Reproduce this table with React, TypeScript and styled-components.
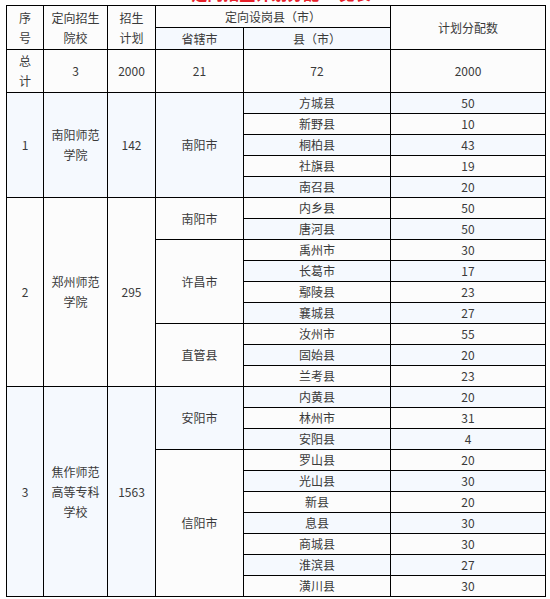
import React from "react";
import styled, { createGlobalStyle } from "styled-components";

const GlobalStyle = createGlobalStyle`
  html, body {
    margin: 0;
    padding: 0;
    background: #ffffff;
  }
  body {
    font-family: "Noto Sans CJK SC", "Noto Sans", sans-serif;
  }
`;

type County = { name: string; count: number };
type City = { name: string; counties: County[] };
type School = { no: string; name: string; plan: number; cities: City[] };

const schools: School[] = [
  {
    no: "1",
    name: "南阳师范学院",
    plan: 142,
    cities: [
      {
        name: "南阳市",
        counties: [
          { name: "方城县", count: 50 },
          { name: "新野县", count: 10 },
          { name: "桐柏县", count: 43 },
          { name: "社旗县", count: 19 },
          { name: "南召县", count: 20 },
        ],
      },
    ],
  },
  {
    no: "2",
    name: "郑州师范学院",
    plan: 295,
    cities: [
      {
        name: "南阳市",
        counties: [
          { name: "内乡县", count: 50 },
          { name: "唐河县", count: 50 },
        ],
      },
      {
        name: "许昌市",
        counties: [
          { name: "禹州市", count: 30 },
          { name: "长葛市", count: 17 },
          { name: "鄢陵县", count: 23 },
          { name: "襄城县", count: 27 },
        ],
      },
      {
        name: "直管县",
        counties: [
          { name: "汝州市", count: 55 },
          { name: "固始县", count: 20 },
          { name: "兰考县", count: 23 },
        ],
      },
    ],
  },
  {
    no: "3",
    name: "焦作师范高等专科学校",
    plan: 1563,
    cities: [
      {
        name: "安阳市",
        counties: [
          { name: "内黄县", count: 20 },
          { name: "林州市", count: 31 },
          { name: "安阳县", count: 4 },
        ],
      },
      {
        name: "信阳市",
        counties: [
          { name: "罗山县", count: 20 },
          { name: "光山县", count: 30 },
          { name: "新县", count: 20 },
          { name: "息县", count: 30 },
          { name: "商城县", count: 30 },
          { name: "淮滨县", count: 27 },
          { name: "潢川县", count: 30 },
        ],
      },
    ],
  },
];

const Page = styled.div`
  width: 550px;
  height: 599px;
  overflow: hidden;
  padding: 0 4px 0 6px;
  box-sizing: border-box;
`;

const Title = styled.div`
  margin-top: -15px;
  margin-bottom: 4px;
  height: 16px;
  line-height: 16px;
  font-size: 16px;
  font-weight: bold;
  color: #e8202a;
  text-align: center;
  padding-left: 10px;
`;

const Table = styled.table`
  border-collapse: collapse;
  table-layout: fixed;
  width: 540px;
  font-size: 12px;
  color: #3a3a3a;
`;

const Row = styled.tr<{ $h?: number }>`
  height: ${(p) => p.$h ?? 21}px;
`;

const Cell = styled.td<{ $blue?: boolean }>`
  border: 1px solid #000;
  padding: 0 7px;
  text-align: center;
  vertical-align: middle;
  line-height: 20px;
  background: ${(p) => (p.$blue ? "#f5f9fe" : "#fcfcfc")};
  word-break: break-all;
`;

const colWidths = [37, 64, 48, 88, 147, 155];

export default function App() {
  const bodyRows: React.ReactNode[] = [];
  let idx = 3;
  schools.forEach((s) => {
    const schoolSpan = s.cities.reduce((n, c) => n + c.counties.length, 0);
    s.cities.forEach((c, ci) => {
      c.counties.forEach((k, ki) => {
        const blue = idx % 2 === 1;
        bodyRows.push(
          <Row key={`${s.no}-${c.name}-${k.name}`}>
            {ci === 0 && ki === 0 && (
              <>
                <Cell $blue={blue} rowSpan={schoolSpan}>{s.no}</Cell>
                <Cell $blue={blue} rowSpan={schoolSpan}>{s.name}</Cell>
                <Cell $blue={blue} rowSpan={schoolSpan}>{s.plan}</Cell>
              </>
            )}
            {ki === 0 && (
              <Cell $blue={blue} rowSpan={c.counties.length}>{c.name}</Cell>
            )}
            <Cell $blue={blue}>{k.name}</Cell>
            <Cell $blue={blue}>{k.count}</Cell>
          </Row>
        );
        idx++;
      });
    });
  });

  return (
    <>
      <GlobalStyle />
      <Page>
        <Title>定向招生计划分配 一览表</Title>
        <Table>
          <colgroup>
            {colWidths.map((w, i) => (
              <col key={i} style={{ width: w }} />
            ))}
          </colgroup>
          <tbody>
            <Row $h={22}>
              <Cell rowSpan={2}>序号</Cell>
              <Cell rowSpan={2}>定向招生院校</Cell>
              <Cell rowSpan={2}>招生计划</Cell>
              <Cell colSpan={2}>定向设岗县（市）</Cell>
              <Cell rowSpan={2}>计划分配数</Cell>
            </Row>
            <Row $h={22}>
              <Cell $blue>省辖市</Cell>
              <Cell $blue>县（市）</Cell>
            </Row>
            <Row $h={43}>
              <Cell>总计</Cell>
              <Cell>3</Cell>
              <Cell>2000</Cell>
              <Cell>21</Cell>
              <Cell>72</Cell>
              <Cell>2000</Cell>
            </Row>
            {bodyRows}
          </tbody>
        </Table>
      </Page>
    </>
  );
}
